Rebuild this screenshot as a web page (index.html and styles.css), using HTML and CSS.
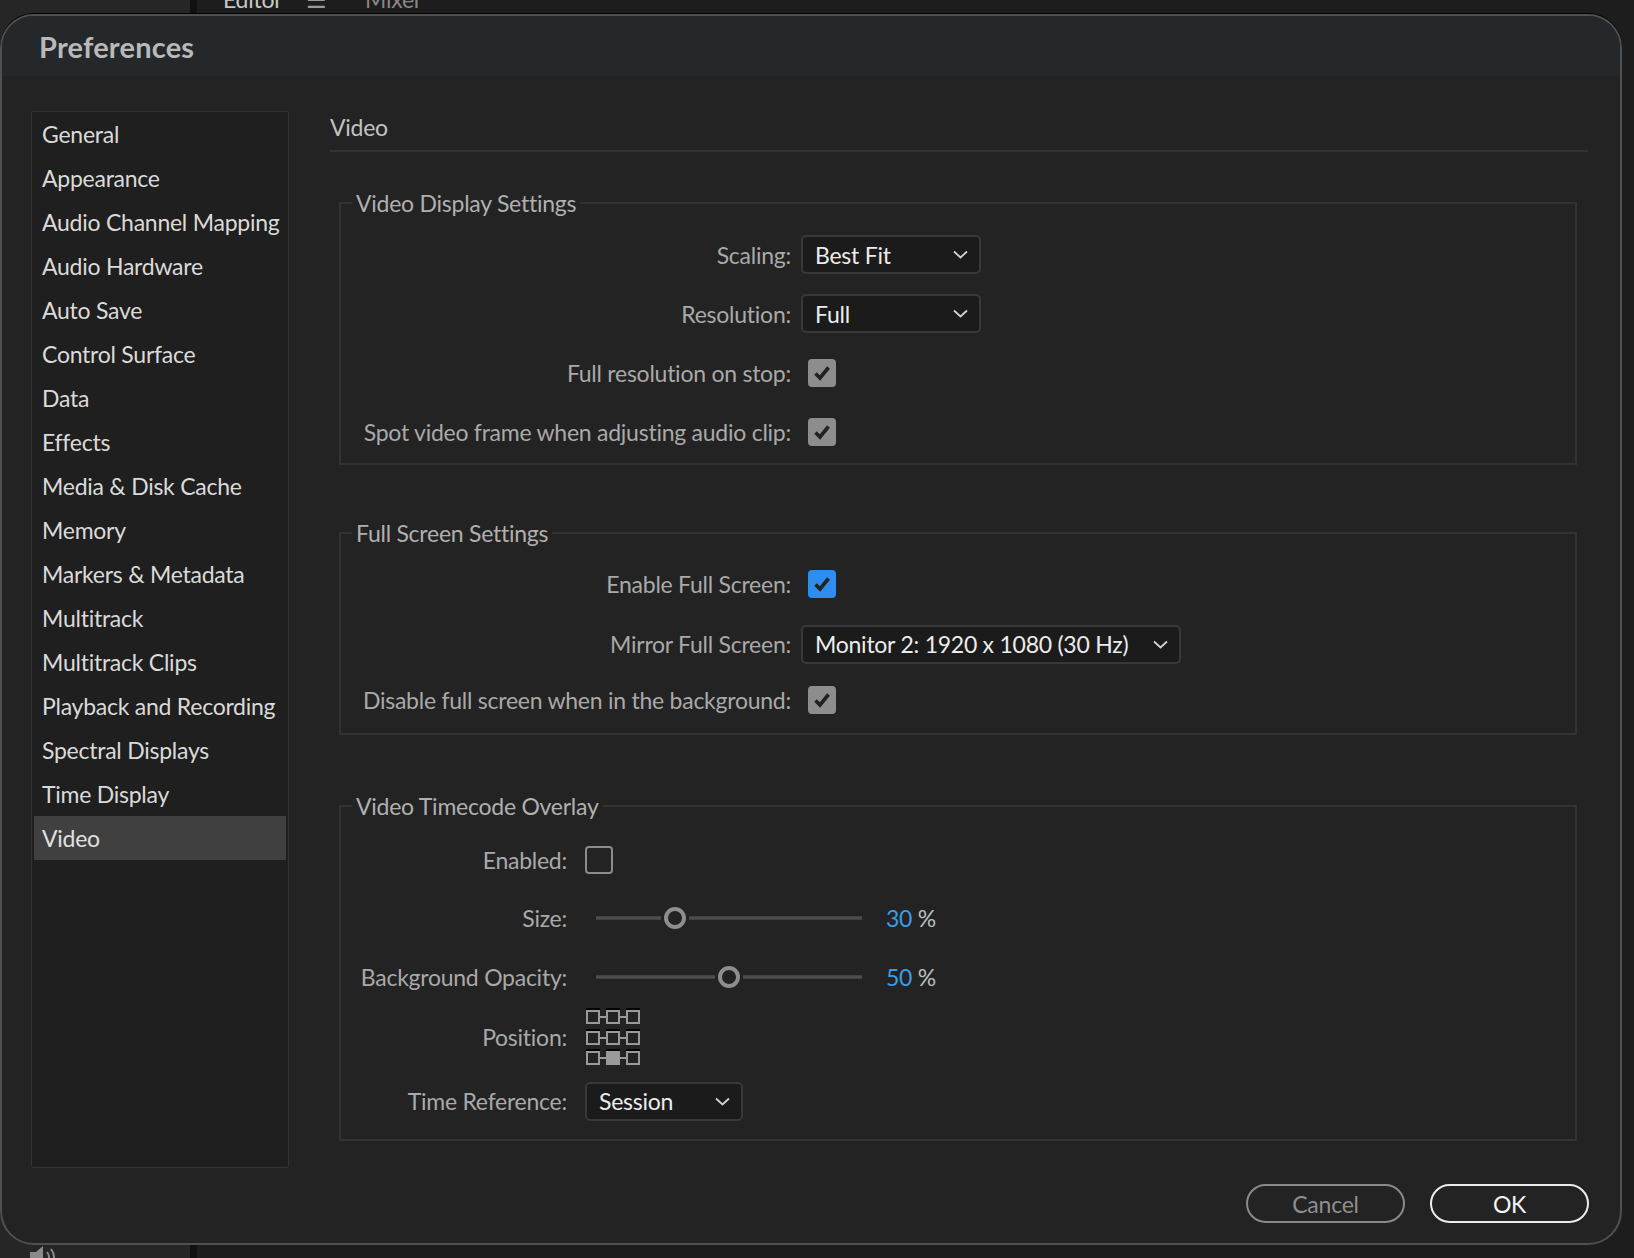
FILE: index.html
```html
<!DOCTYPE html>
<html lang="en">

<head>
    <meta charset="UTF-8">
    <meta name="viewport" content="width=device-width, initial-scale=1.0">
    <title>Preferences</title>
    <link rel="stylesheet" href="styles.css">
</head>

<body>
    <!-- the app window behind the dialog -->
    <div class="app">
        <div class="app-left">
            <svg class="speaker" width="30" height="26" viewBox="0 0 30 26">
                <path d="M2 8 H8 L15 2 V24 L8 18 H2 Z" fill="#8a8a8a" />
                <path d="M19 8 Q23 13 19 18" stroke="#8a8a8a" stroke-width="2" fill="none" />
                <path d="M23 5 Q29 13 23 21" stroke="#8a8a8a" stroke-width="2" fill="none" />
            </svg>
        </div>
        <div class="app-sep"></div>
        <div class="app-main">
            <div class="tabs">
                <span class="tab active">Editor</span>
                <span class="tab-menu">&#9776;</span>
                <span class="tab">Mixer</span>
            </div>
        </div>
    </div>

    <div class="dialog">
        <div class="dialog-title">Preferences</div>

        <div class="dialog-body">
            <ul class="sidebar">
                <li>General</li>
                <li>Appearance</li>
                <li>Audio Channel Mapping</li>
                <li>Audio Hardware</li>
                <li>Auto Save</li>
                <li>Control Surface</li>
                <li>Data</li>
                <li>Effects</li>
                <li>Media &amp; Disk Cache</li>
                <li>Memory</li>
                <li>Markers &amp; Metadata</li>
                <li>Multitrack</li>
                <li>Multitrack Clips</li>
                <li>Playback and Recording</li>
                <li>Spectral Displays</li>
                <li>Time Display</li>
                <li class="selected">Video</li>
            </ul>

            <div class="content">
                <div class="page-title">Video</div>

                <fieldset class="group group-display">
                    <legend>Video Display Settings</legend>
                    <label class="label">Scaling:</label>
                    <div class="dropdown dd-short"><span>Best Fit</span>
                        <svg class="chev" width="15" height="9" viewBox="0 0 15 9"><path d="M1 1.5 L7.5 7.5 L14 1.5" /></svg>
                    </div>
                    <label class="label">Resolution:</label>
                    <div class="dropdown dd-short"><span>Full</span>
                        <svg class="chev" width="15" height="9" viewBox="0 0 15 9"><path d="M1 1.5 L7.5 7.5 L14 1.5" /></svg>
                    </div>
                    <label class="label">Full resolution on stop:</label>
                    <div class="check checked"><svg width="28" height="28" viewBox="0 0 28 28"><path d="M7.5 14.5 L12 19 L20.5 8.5" /></svg></div>
                    <label class="label">Spot video frame when adjusting audio clip:</label>
                    <div class="check checked"><svg width="28" height="28" viewBox="0 0 28 28"><path d="M7.5 14.5 L12 19 L20.5 8.5" /></svg></div>
                </fieldset>

                <fieldset class="group group-full">
                    <legend>Full Screen Settings</legend>
                    <label class="label">Enable Full Screen:</label>
                    <div class="check checked blue"><svg width="28" height="28" viewBox="0 0 28 28"><path d="M7.5 14.5 L12 19 L20.5 8.5" /></svg></div>
                    <label class="label">Mirror Full Screen:</label>
                    <div class="dropdown dd-wide"><span>Monitor 2: 1920 x 1080 (30 Hz)</span>
                        <svg class="chev" width="15" height="9" viewBox="0 0 15 9"><path d="M1 1.5 L7.5 7.5 L14 1.5" /></svg>
                    </div>
                    <label class="label">Disable full screen when in the background:</label>
                    <div class="check checked"><svg width="28" height="28" viewBox="0 0 28 28"><path d="M7.5 14.5 L12 19 L20.5 8.5" /></svg></div>
                </fieldset>

                <fieldset class="group group-timecode">
                    <legend>Video Timecode Overlay</legend>
                    <label class="label">Enabled:</label>
                    <div class="check"></div>
                    <label class="label">Size:</label>
                    <div class="slider-row">
                        <svg width="278" height="24" viewBox="0 0 278 24">
                            <line class="track" x1="11" y1="12" x2="76" y2="12" />
                            <line class="track" x1="104" y1="12" x2="277" y2="12" />
                            <circle class="knob" cx="90" cy="12" r="9" />
                        </svg>
                        <span class="value"><b>30</b> %</span>
                    </div>
                    <label class="label">Background Opacity:</label>
                    <div class="slider-row">
                        <svg width="278" height="24" viewBox="0 0 278 24">
                            <line class="track" x1="11" y1="12" x2="130" y2="12" />
                            <line class="track" x1="158" y1="12" x2="277" y2="12" />
                            <circle class="knob" cx="144" cy="12" r="9" />
                        </svg>
                        <span class="value"><b>50</b> %</span>
                    </div>
                    <label class="label">Position:</label>
                    <svg class="position" width="56" height="58" viewBox="0 0 56 58">
                        <g>
                            <rect class="shade" x="0" y="0" width="14" height="3" />
                            <rect class="box" x="1" y="3" width="12" height="12" />
                            <rect class="shade" x="20" y="0" width="14" height="3" />
                            <rect class="box" x="21" y="3" width="12" height="12" />
                            <rect class="shade" x="40" y="0" width="14" height="3" />
                            <rect class="box" x="41" y="3" width="12" height="12" />
                            <line class="link" x1="14" y1="9" x2="20" y2="9" />
                            <line class="link" x1="34" y1="9" x2="40" y2="9" />
                        </g>
                        <g>
                            <rect class="shade" x="0" y="21" width="14" height="3" />
                            <rect class="box" x="1" y="24" width="12" height="12" />
                            <rect class="shade" x="20" y="21" width="14" height="3" />
                            <rect class="box" x="21" y="24" width="12" height="12" />
                            <rect class="shade" x="40" y="21" width="14" height="3" />
                            <rect class="box" x="41" y="24" width="12" height="12" />
                            <line class="link" x1="14" y1="30" x2="20" y2="30" />
                            <line class="link" x1="34" y1="30" x2="40" y2="30" />
                        </g>
                        <g>
                            <rect class="shade" x="0" y="41" width="14" height="3" />
                            <rect class="box" x="1" y="44" width="12" height="12" />
                            <rect class="shade" x="20" y="41" width="14" height="3" />
                            <rect class="box on" x="21" y="44" width="12" height="12" />
                            <rect class="shade" x="40" y="41" width="14" height="3" />
                            <rect class="box" x="41" y="44" width="12" height="12" />
                            <line class="link" x1="14" y1="50" x2="20" y2="50" />
                            <line class="link" x1="34" y1="50" x2="40" y2="50" />
                        </g>
                    </svg>
                    <label class="label">Time Reference:</label>
                    <div class="dropdown dd-session"><span>Session</span>
                        <svg class="chev" width="15" height="9" viewBox="0 0 15 9"><path d="M1 1.5 L7.5 7.5 L14 1.5" /></svg>
                    </div>
                </fieldset>
            </div>
        </div>

        <div class="dialog-footer">
            <button class="btn btn-cancel">Cancel</button>
            <button class="btn btn-ok">OK</button>
        </div>
    </div>
</body>

</html>
```

FILE: styles.css
```css
body {
    margin: 0;
    padding: 0;
    width: 1634px;
    height: 1258px;
    overflow: hidden;
    background-color: #1c1c1c;
    font-family: Lato, "Open Sans", sans-serif;
    letter-spacing: -0.25px;
    position: relative;
}

/* app behind the dialog */
.app {
    display: grid;
    grid-template-columns: 190px 7px 1fr;
    height: 1258px;
}

.app-left {
    background-color: #262626;
    display: flex;
    flex-direction: column;
    justify-content: flex-end;
    padding-left: 28px;
}

.speaker {
    margin-bottom: -12px;
}

.app-sep {
    background-color: #111;
}

.app-main {
    background-color: #1d1d1d;
}

.tabs {
    display: flex;
    align-items: center;
    gap: 24px;
    margin-top: -16px;
    padding-left: 26px;
    font-size: 23px;
    line-height: 30px;
}

.tab {
    color: #888;
}

.tab.active {
    color: #c8c8c8;
}

.tab-menu {
    color: #9a9a9a;
    margin-right: 14px;
}

/* dialog */
.dialog {
    position: absolute;
    left: 0;
    top: 14px;
    width: 1622px;
    height: 1231px;
    box-sizing: border-box;
    border: 2px solid #505050;
    border-radius: 34px;
    box-shadow: 0 -1px 0 #000;
    background-color: #232323;
    overflow: hidden;
    display: flex;
    flex-direction: column;
}

.dialog-title {
    height: 60px;
    flex-shrink: 0;
    display: flex;
    align-items: center;
    padding-left: 37px;
    padding-top: 1px;
    box-sizing: border-box;
    background-color: #24282b;
    color: #b9b9b9;
    font-size: 29px;
    font-weight: 700;
    letter-spacing: 0.2px;
}

.dialog-body {
    flex: 1;
    display: flex;
    gap: 41px;
    padding: 35px 32px 0 29px;
}

.sidebar {
    list-style: none;
    margin: 0;
    padding: 0 2px;
    width: 258px;
    box-sizing: border-box;
    flex-shrink: 0;
    border: 1px solid #333;
    border-radius: 2px;
    background-color: #1f1f1f;
}

.sidebar li {
    height: 44px;
    line-height: 44px;
    padding-left: 8px;
    color: #dadada;
    font-size: 23px;
    white-space: nowrap;
}

.sidebar li.selected {
    background-color: #404040;
    color: #e0e0e0;
}

.content {
    flex: 1;
    display: flex;
    flex-direction: column;
}

.page-title {
    font-size: 23px;
    line-height: 32px;
    padding-bottom: 7px;
    color: #c2c2c2;
    border-bottom: 2px solid #333;
}

/* groups */
.group {
    margin: 36px 11px 0 9px;
    padding: 0 0 2px 0;
    border: 2px solid #333;
    min-inline-size: 0;
    display: grid;
    grid-template-columns: 450px 1fr;
    column-gap: 10px;
    align-items: center;
}

.group legend {
    font-size: 23px;
    line-height: 30px;
    color: #b0b0b0;
    margin-left: 11px;
    padding: 0 4px;
}

.group-display {
    padding-top: 7px;
    grid-template-rows: 59px 59px 59px 59px;
}

.group-full {
    margin-top: 53px;
    padding-top: 7px;
    padding-bottom: 8px;
    grid-template-rows: 58px 62px 50px;
}

.group-timecode {
    margin-top: 56px;
    padding-top: 10px;
    padding-bottom: 5px;
    grid-template-columns: 226px 1fr;
    column-gap: 18px;
    grid-template-rows: 58px 58px 59px 62px 66px;
}

.label {
    text-align: right;
    font-size: 23px;
    color: #a9a9a9;
    white-space: nowrap;
}

/* controls */
.dropdown {
    display: flex;
    align-items: center;
    justify-content: space-between;
    height: 39px;
    box-sizing: border-box;
    padding: 0 11px 0 12px;
    border: 2px solid #383838;
    border-radius: 5px;
    background-color: #1b1b1b;
    color: #ececec;
    font-size: 23px;
}

.dd-short {
    width: 180px;
}

.dd-wide {
    width: 380px;
}

.dd-session {
    width: 158px;
}

.chev path {
    fill: none;
    stroke: #d2d2d2;
    stroke-width: 1.8;
}

.check {
    width: 28px;
    height: 28px;
    box-sizing: border-box;
    border: 2.5px solid #8c8c8c;
    border-radius: 4px;
}

.group-display .check,
.group-full .check {
    margin-left: 7px;
}

.check.checked {
    border: none;
    background-color: #8d8d8d;
}

.check.blue {
    background-color: #2d8ef0;
}

.check svg {
    display: block;
}

.check path {
    fill: none;
    stroke: #222;
    stroke-width: 3.6;
}

.slider-row {
    display: flex;
    align-items: center;
}

.slider-row svg {
    display: block;
}

.track {
    stroke: #4d4d4d;
    stroke-width: 3.5;
}

.knob {
    fill: #232323;
    stroke: #8e8e8e;
    stroke-width: 4;
}

.value {
    margin-left: 23px;
    font-size: 23px;
    color: #bdbdbd;
}

.value b {
    font-weight: 400;
    color: #3b9de8;
}

.position {
    display: block;
    margin-left: 1px;
}

.shade {
    fill: #050505;
}

.box {
    fill: none;
    stroke: #9a9a9a;
    stroke-width: 2;
}

.box.on {
    fill: #9a9a9a;
}

.link {
    stroke: #9a9a9a;
    stroke-width: 2;
}

/* footer buttons */
.dialog-footer {
    height: 39px;
    flex-shrink: 0;
    margin: 16px 0 20px;
    padding-right: 31px;
    display: flex;
    justify-content: flex-end;
    gap: 25px;
}

.btn {
    width: 159px;
    height: 39px;
    border-radius: 20px;
    background: transparent;
    font-family: Lato, "Open Sans", sans-serif;
    font-size: 23px;
    letter-spacing: -0.25px;
    padding: 0;
}

.btn-cancel {
    border: 2.5px solid #8a8a8a;
    color: #8e8e8e;
}

.btn-ok {
    border: 2.5px solid #ececec;
    color: #f4f4f4;
}
```
